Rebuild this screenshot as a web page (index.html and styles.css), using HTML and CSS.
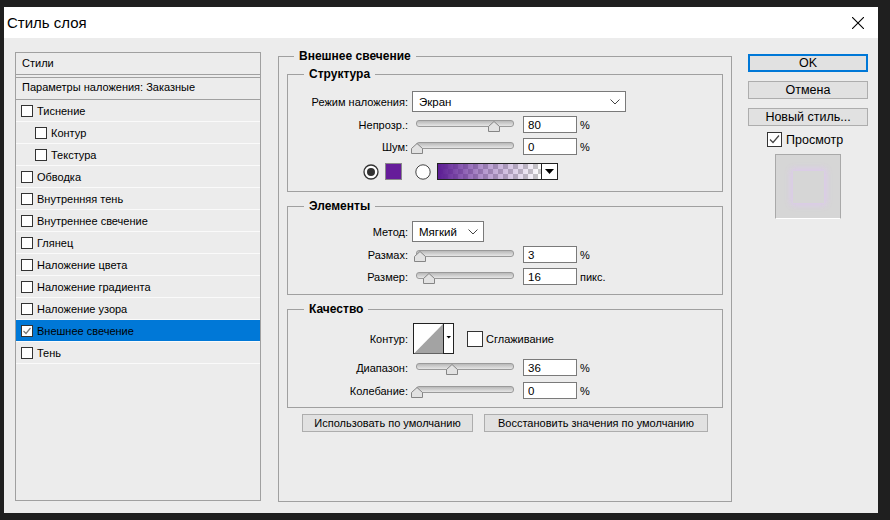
FILE: index.html
```html
<!DOCTYPE html>
<html lang="ru">
<head>
  <meta charset="UTF-8">
  <title>Стиль слоя</title>
  <link rel="stylesheet" href="styles.css">
</head>
<body>

  <div class="dialog">
    <div class="titlebar">
      <span>Стиль слоя</span>
      <svg class="close" width="12" height="12" viewBox="0 0 12 12"><path d="M0 0L12 12M12 0L0 12" stroke="#000" stroke-width="1.1"/></svg>
    </div>

    <div class="layout">
      <!-- list of effects -->
      <div class="styles-list">
        <div class="list-head">Стили</div>
        <div class="list-blend">Параметры наложения: Заказные</div>
        <div class="list-item"><span class="cb"></span>Тиснение</div>
        <div class="list-item sub"><span class="cb"></span>Контур</div>
        <div class="list-item sub"><span class="cb"></span>Текстура</div>
        <div class="list-item"><span class="cb"></span>Обводка</div>
        <div class="list-item"><span class="cb"></span>Внутренняя тень</div>
        <div class="list-item"><span class="cb"></span>Внутреннее свечение</div>
        <div class="list-item"><span class="cb"></span>Глянец</div>
        <div class="list-item"><span class="cb"></span>Наложение цвета</div>
        <div class="list-item"><span class="cb"></span>Наложение градиента</div>
        <div class="list-item"><span class="cb"></span>Наложение узора</div>
        <div class="list-item active">
          <span class="cb"><svg width="10" height="10" viewBox="0 0 10 10"><path d="M1.5 5L4 7.5L8.5 2" stroke="#777" stroke-width="1.2" fill="none"/></svg></span>Внешнее свечение
        </div>
        <div class="list-item"><span class="cb"></span>Тень</div>
      </div>

      <!-- outer glow settings -->
      <fieldset class="group-main">
        <legend>Внешнее свечение</legend>

        <fieldset class="section sec-struct">
          <legend>Структура</legend>
          <div class="row h21">
            <span class="lbl">Режим наложения:</span>
            <div class="select wide">Экран
              <svg width="10" height="6" viewBox="0 0 10 6"><path d="M0.5 0.5L5 5L9.5 0.5" stroke="#444" fill="none"/></svg>
            </div>
          </div>
          <div class="row h17 mt4">
            <span class="lbl">Непрозр.:</span>
            <div class="slider">
              <svg class="thumb" style="left:78px" width="12" height="11" viewBox="0 0 12 11"><path d="M0.5 10.5V5.5L6 0.5L11.5 5.5V10.5Z" fill="#e2e2e2" stroke="#858585"/></svg>
            </div>
            <input class="field" value="80"><span class="unit">%</span>
          </div>
          <div class="row h17 mt5">
            <span class="lbl">Шум:</span>
            <div class="slider">
              <svg class="thumb" style="left:1px" width="12" height="11" viewBox="0 0 12 11"><path d="M0.5 10.5V5.5L6 0.5L11.5 5.5V10.5Z" fill="#e2e2e2" stroke="#858585"/></svg>
            </div>
            <input class="field" value="0"><span class="unit">%</span>
          </div>
          <div class="color-row">
            <svg width="16" height="16" viewBox="0 0 16 16"><circle cx="8" cy="8" r="7" fill="#fff" stroke="#333" stroke-width="1.3"/><circle cx="8" cy="8" r="4" fill="#333"/></svg>
            <span class="swatch"></span>
            <svg class="radio-off" width="16" height="16" viewBox="0 0 16 16"><circle cx="8" cy="8" r="7.2" fill="#fff" stroke="#444"/></svg>
            <div class="gradient">
              <span class="grad-fill"></span>
              <span class="grad-arrow"><svg width="9" height="5" viewBox="0 0 9 5"><path d="M0 0H9L4.5 5Z" fill="#000"/></svg></span>
            </div>
          </div>
        </fieldset>

        <fieldset class="section sec-elem">
          <legend>Элементы</legend>
          <div class="row h21">
            <span class="lbl">Метод:</span>
            <div class="select narrow">Мягкий
              <svg width="10" height="6" viewBox="0 0 10 6"><path d="M0.5 0.5L5 5L9.5 0.5" stroke="#444" fill="none"/></svg>
            </div>
          </div>
          <div class="row h17 mt4">
            <span class="lbl">Размах:</span>
            <div class="slider">
              <svg class="thumb" style="left:4px" width="12" height="11" viewBox="0 0 12 11"><path d="M0.5 10.5V5.5L6 0.5L11.5 5.5V10.5Z" fill="#e2e2e2" stroke="#858585"/></svg>
            </div>
            <input class="field" value="3"><span class="unit">%</span>
          </div>
          <div class="row h17 mt5">
            <span class="lbl">Размер:</span>
            <div class="slider">
              <svg class="thumb" style="left:13px" width="12" height="11" viewBox="0 0 12 11"><path d="M0.5 10.5V5.5L6 0.5L11.5 5.5V10.5Z" fill="#e2e2e2" stroke="#858585"/></svg>
            </div>
            <input class="field" value="16"><span class="unit">пикс.</span>
          </div>
        </fieldset>

        <fieldset class="section sec-quality">
          <legend>Качество</legend>
          <div class="row h31">
            <span class="lbl">Контур:</span>
            <svg class="contour" width="41" height="31" viewBox="0 0 41 31">
              <rect x="0.5" y="0.5" width="40" height="30" fill="#fff" stroke="#222"/>
              <path d="M1 30.5L30 1V30.5Z" fill="#a3a3a3"/>
              <path d="M30.5 0V31" stroke="#222"/>
              <path d="M33.5 13H38L35.75 15.5Z" fill="#000"/>
            </svg>
            <span class="check-box"></span>
            <span class="check-label">Сглаживание</span>
          </div>
          <div class="row h17 mt5">
            <span class="lbl">Диапазон:</span>
            <div class="slider">
              <svg class="thumb" style="left:36px" width="12" height="11" viewBox="0 0 12 11"><path d="M0.5 10.5V5.5L6 0.5L11.5 5.5V10.5Z" fill="#e2e2e2" stroke="#858585"/></svg>
            </div>
            <input class="field" value="36"><span class="unit">%</span>
          </div>
          <div class="row h17 mt6">
            <span class="lbl">Колебание:</span>
            <div class="slider">
              <svg class="thumb" style="left:1px" width="12" height="11" viewBox="0 0 12 11"><path d="M0.5 10.5V5.5L6 0.5L11.5 5.5V10.5Z" fill="#e2e2e2" stroke="#858585"/></svg>
            </div>
            <input class="field" value="0"><span class="unit">%</span>
          </div>
        </fieldset>

        <div class="defaults">
          <button class="btn btn-use">Использовать по умолчанию</button>
          <button class="btn btn-reset">Восстановить значения по умолчанию</button>
        </div>
      </fieldset>

      <!-- dialog buttons -->
      <div class="side">
        <button class="btn side-btn default">OK</button>
        <button class="btn side-btn">Отмена</button>
        <button class="btn side-btn">Новый стиль...</button>
        <div class="preview-toggle">
          <span class="check-box on"><svg width="13" height="13" viewBox="0 0 13 13"><path d="M2 6.5L5 9.5L11 2.5" stroke="#444" stroke-width="1.2" fill="none"/></svg></span>
          <span>Просмотр</span>
        </div>
        <div class="preview"><span class="preview-square"></span></div>
      </div>
    </div>
  </div>

</body>
</html>
```

FILE: styles.css
```css
* {
  box-sizing: border-box;
}

body {
  margin: 0;
  background-color: #1f1f1f;
  font-family: "Liberation Sans", Arial, sans-serif;
  font-size: 11px;
  color: #000;
}

.dialog {
  width: 874px;
  height: 506px;
  margin: 7px 0 0 4px;
  background-color: #ececec;
}

.titlebar {
  height: 31px;
  background-color: #fff;
  display: flex;
  align-items: center;
  justify-content: space-between;
  padding: 0 14px 0 3px;
  font-size: 15px;
}

.layout {
  display: flex;
  align-items: flex-start;
  padding: 11px 0 0 11px;
}

/* left list */
.styles-list {
  width: 246px;
  height: 449px;
  margin-top: 3px;
  border: 1px solid #a0a0a0;
}

.list-head {
  height: 22px;
  line-height: 21px;
  padding-left: 6px;
  border-bottom: 1px solid #a0a0a0;
}

.list-blend {
  height: 23px;
  line-height: 19px;
  margin-top: 2px;
  padding-left: 6px;
  border-top: 1px solid #a0a0a0;
  border-bottom: 1px solid #a0a0a0;
}

.list-item {
  display: flex;
  align-items: center;
  height: 22px;
  padding-left: 5px;
  border-bottom: 1px solid #fafafa;
}

.list-item.sub {
  padding-left: 19px;
}

.list-item.active {
  background-color: #0078d7;
}

.cb {
  width: 12px;
  height: 12px;
  margin-right: 4px;
  border: 1px solid #333;
  background-color: #fff;
  display: flex;
  align-items: center;
  justify-content: center;
}

/* group boxes */
fieldset {
  margin: 0;
  padding: 0;
  min-width: 0;
  border: 1px solid #a0a0a0;
}

legend {
  padding: 0 5px;
  font-size: 12px;
  font-weight: bold;
  line-height: 14px;
}

.group-main {
  width: 454px;
  height: 453px;
  margin-left: 17px;
  padding: 4px 8px 0;
}

.group-main > legend {
  margin-left: 7px;
}

.section > legend {
  margin-left: 16px;
}

.sec-struct {
  padding: 10px 0 11px;
}

.sec-elem {
  margin-top: 7px;
  padding: 8px 0 9px;
}

.sec-quality {
  margin-top: 7px;
  padding: 7px 0 8px;
}

.row {
  display: flex;
  align-items: center;
}

.h17 { height: 17px; }
.h21 { height: 21px; }
.h31 { height: 31px; }
.mt4 { margin-top: 4px; }
.mt5 { margin-top: 5px; }
.mt6 { margin-top: 6px; }

.lbl {
  flex: none;
  width: 120px;
  margin-right: 4px;
  text-align: right;
}

.select {
  height: 21px;
  display: flex;
  align-items: center;
  justify-content: space-between;
  padding: 0 5px 0 6px;
  border: 1px solid #7a7a7a;
  background-color: #fff;
  font-size: 11.5px;
}

.select.wide {
  width: 214px;
}

.select.narrow {
  width: 72px;
}

.slider {
  position: relative;
  flex: none;
  width: 98px;
  height: 17px;
  margin-left: 4px;
}

.slider::before {
  content: "";
  position: absolute;
  left: 0;
  right: 0;
  top: 4px;
  height: 5px;
  border: 1px solid #9a9a9a;
  border-radius: 3px;
  background: linear-gradient(#b9b9b9, #e6e6e6);
}

.thumb {
  position: absolute;
  top: 5px;
  margin-left: -6px;
}

.field {
  width: 54px;
  height: 17px;
  margin: 0 0 0 9px;
  padding: 0 4px;
  border: 1px solid #7a7a7a;
  background-color: #fff;
  font-family: "Liberation Sans", Arial, sans-serif;
  font-size: 11.5px;
  color: #000;
  outline: none;
}

.unit {
  margin-left: 3px;
}

.color-row {
  display: flex;
  align-items: center;
  height: 17px;
  margin: 8px 0 0 75px;
}

.swatch {
  width: 17px;
  height: 17px;
  margin-left: 6px;
  border: 1px solid #8a8a8a;
  background-color: #661d9a;
}

.radio-off {
  margin-left: 13px;
}

.gradient {
  display: flex;
  width: 121px;
  height: 17px;
  margin-left: 6px;
  border: 1px solid #222;
}

.grad-fill {
  flex: 1;
  background:
    linear-gradient(to right, #5c1c94, rgba(92, 28, 148, 0.45) 45%, rgba(92, 28, 148, 0)),
    repeating-conic-gradient(#c8c8c8 0 25%, #fff 0 50%) 0 0 / 10px 10px;
}

.grad-arrow {
  width: 16px;
  display: flex;
  align-items: center;
  justify-content: center;
  border-left: 1px solid #222;
  background-color: #fff;
}

.contour {
  margin-left: 1px;
}

.check-box {
  width: 16px;
  height: 16px;
  margin-left: 13px;
  border: 1px solid #333;
  background-color: #fff;
}

.check-label {
  margin-left: 3px;
}

/* buttons */
.btn {
  height: 18px;
  padding: 0;
  border: 1px solid #adadad;
  background-color: #e1e1e1;
  font-family: "Liberation Sans", Arial, sans-serif;
  font-size: 11px;
  color: #000;
}

.defaults {
  display: flex;
  gap: 11px;
  margin: 6px 0 0 15px;
}

.btn-use {
  width: 171px;
}

.btn-reset {
  width: 224px;
}

.side {
  width: 120px;
  margin: 5px 0 0 16px;
  display: flex;
  flex-direction: column;
  gap: 9px;
}

.side-btn {
  font-size: 12.5px;
}

.side-btn.default {
  border: 2px solid #0078d7;
}

.preview-toggle {
  display: flex;
  align-items: center;
  margin: -3px 0 0 19px;
  font-size: 12.5px;
}

.preview-toggle .check-box {
  width: 15px;
  height: 15px;
  margin: 0 4px 0 0;
  display: flex;
  align-items: center;
  justify-content: center;
}

.preview {
  width: 66px;
  height: 65px;
  margin: -2px 0 0 27px;
  display: flex;
  align-items: center;
  justify-content: center;
  background-color: #d6d6d6;
  border: 1px solid #a9a9a9;
  border-bottom-color: #fff;
}

.preview-square {
  width: 31px;
  height: 32px;
  background-color: #d6d6d6;
  box-shadow: 0 0 6px 2px rgba(222, 200, 240, 0.9);
}
```
